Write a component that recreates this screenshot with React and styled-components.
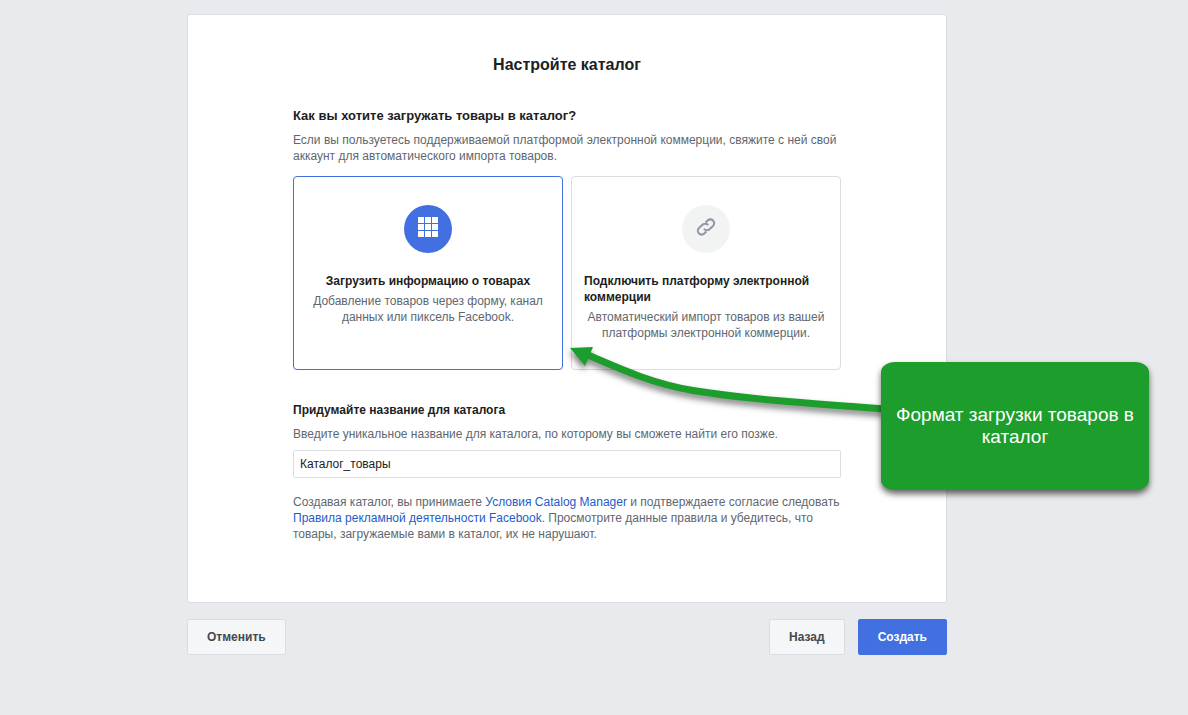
import React, { useState } from 'react';
import styled, { createGlobalStyle } from 'styled-components';

const GlobalStyle = createGlobalStyle`
  *, *::before, *::after {
    box-sizing: border-box;
  }

  body {
    margin: 0;
    background-color: #e9eaed;
    color: #1c1e21;
    font-family: "Liberation Sans", Arial, sans-serif;
    font-size: 12px;
    line-height: 16px;
    overflow-x: hidden;
  }
`;

const Page = styled.main`
  padding: 14px 54px 60px 0;
`;

const Column = styled.div`
  position: relative;
  width: 100%;
  max-width: 760px;
  margin: 0 auto;
`;

const Panel = styled.section`
  background-color: #ffffff;
  border: 1px solid #dadde1;
  border-radius: 3px;
  padding: 40px 105px 60px;
`;

const Title = styled.h1`
  margin: 0 0 33px;
  font-size: 16px;
  line-height: 20px;
  text-align: center;
`;

const Heading = styled.h2`
  margin: 0 0 8px;
  font-size: 13px;
  line-height: 16px;
`;

const FieldLabel = styled.label`
  display: block;
  margin: 32px 0 8px;
  font-weight: bold;
`;

const Text = styled.p`
  margin: 0;
  color: #606770;
`;

const Options = styled.div`
  display: grid;
  grid-template-columns: 1fr 1fr;
  gap: 8px;
  margin-top: 12px;
`;

const Option = styled.label`
  display: flex;
  flex-direction: column;
  align-items: center;
  padding: 28px 12px;
  border: 1px solid ${(props) => (props.$selected ? '#4270e0' : '#dadde1')};
  border-radius: 4px;
  cursor: pointer;
`;

const HiddenRadio = styled.input`
  appearance: none;
  position: absolute;
  width: 1px;
  height: 1px;
  margin: 0;
  opacity: 0;
`;

const IconCircle = styled.span`
  display: flex;
  align-items: center;
  justify-content: center;
  width: 48px;
  height: 48px;
  margin-bottom: 20px;
  padding-bottom: 4px;
  border-radius: 50%;
  background-color: ${(props) => (props.$selected ? '#4270e0' : '#f2f4f4')};
  color: ${(props) => (props.$selected ? '#ffffff' : '#9497a2')};
`;

const OptionTitle = styled.span`
  margin-bottom: 4px;
  font-weight: bold;
`;

const OptionText = styled.span`
  color: #606770;
  text-align: center;
`;

const NameInput = styled.input`
  display: block;
  width: 100%;
  height: 28px;
  margin: 8px 0 16px;
  padding: 0 6px;
  border: 1px solid #dadde1;
  border-radius: 2px;
  background-color: #ffffff;
  color: #1c1e21;
  font: inherit;
`;

const Link = styled.a`
  color: #245bcb;
  text-decoration: none;
`;

const Footer = styled.footer`
  display: flex;
  gap: 13px;
  margin-top: 16px;
`;

const Button = styled.button`
  height: 36px;
  padding: 0 19px;
  border: 1px solid ${(props) => (props.$primary ? '#4270e0' : '#dadde1')};
  border-radius: 2px;
  background-color: ${(props) => (props.$primary ? '#4270e0' : '#f5f6f7')};
  color: ${(props) => (props.$primary ? '#ffffff' : '#444950')};
  font: inherit;
  font-weight: bold;
  cursor: pointer;
`;

const CancelButton = styled(Button)`
  margin-right: auto;
`;

const Annotation = styled.aside`
  position: absolute;
  top: 326px;
  left: 378px;
  display: flex;
  align-items: flex-start;
  pointer-events: none;
`;

const Arrow = styled.svg`
  flex: none;
  margin-right: -4px;
  overflow: visible;
  filter: drop-shadow(-1px 4px 3px rgba(0, 0, 0, 0.5));
`;

const Callout = styled.div`
  position: relative;
  display: flex;
  align-items: center;
  justify-content: center;
  width: 268px;
  height: 128px;
  margin-top: 22px;
  padding: 0 12px;
  border-radius: 14px / 10px;
  background-color: #1d9e2c;
  box-shadow: 0 4px 6px rgba(0, 0, 0, 0.6);
  color: #ffffff;
  font-size: 19px;
  line-height: 22px;
  text-align: center;
`;

function GridIcon() {
  return (
    <svg width="20" height="20" viewBox="0 0 20 20" fill="currentColor" aria-hidden="true">
      {[0, 7, 14].map((y) =>
        [0, 7, 14].map((x) => <rect key={`${x}-${y}`} x={x} y={y} width="6" height="6" />)
      )}
    </svg>
  );
}

function ChainIcon() {
  return (
    <svg
      width="20"
      height="20"
      viewBox="0 0 24 24"
      fill="none"
      stroke="currentColor"
      strokeWidth="2.5"
      aria-hidden="true"
    >
      <path d="M14.6 9.9A4.5 4.5 0 0 0 8.1 9.1l-4.5 4.2a4.5 4.5 0 0 0 6.4 6.5l2.4-2.3" />
      <path d="M9.4 14.1a4.5 4.5 0 0 0 6.5.8l4.5-4.2a4.5 4.5 0 0 0-6.4-6.5l-2.4 2.3" />
    </svg>
  );
}

const options = [
  {
    id: 'upload',
    icon: <GridIcon />,
    title: 'Загрузить информацию о товарах',
    text: 'Добавление товаров через форму, канал данных или пиксель Facebook.',
  },
  {
    id: 'connect',
    icon: <ChainIcon />,
    title: 'Подключить платформу электронной коммерции',
    text: 'Автоматический импорт товаров из вашей платформы электронной коммерции.',
  },
];

function App() {
  const [method, setMethod] = useState('upload');
  const [name, setName] = useState('Каталог_товары');

  return (
    <Page>
      <GlobalStyle />
      <Column>
        <Panel>
          <Title>Настройте каталог</Title>
          <Heading id="method-heading">Как вы хотите загружать товары в каталог?</Heading>
          <Text>
            Если вы пользуетесь поддерживаемой платформой электронной коммерции, свяжите с ней свой
            аккаунт для автоматического импорта товаров.
          </Text>
          <Options role="radiogroup" aria-labelledby="method-heading">
            {options.map((option) => (
              <Option key={option.id} $selected={method === option.id}>
                <HiddenRadio
                  type="radio"
                  name="method"
                  value={option.id}
                  checked={method === option.id}
                  onChange={() => setMethod(option.id)}
                />
                <IconCircle $selected={method === option.id}>{option.icon}</IconCircle>
                <OptionTitle>{option.title}</OptionTitle>
                <OptionText>{option.text}</OptionText>
              </Option>
            ))}
          </Options>
          <FieldLabel htmlFor="catalog-name">Придумайте название для каталога</FieldLabel>
          <Text>Введите уникальное название для каталога, по которому вы сможете найти его позже.</Text>
          <NameInput
            id="catalog-name"
            type="text"
            value={name}
            onChange={(e) => setName(e.target.value)}
          />
          <Text>
            Создавая каталог, вы принимаете <Link href="#terms">Условия Catalog Manager</Link> и
            подтверждаете согласие следовать{' '}
            <Link href="#policies">Правила рекламной деятельности Facebook</Link>. Просмотрите данные
            правила и убедитесь, что товары, загружаемые вами в каталог, их не нарушают.
          </Text>
        </Panel>
        <Footer>
          <CancelButton type="button">Отменить</CancelButton>
          <Button type="button">Назад</Button>
          <Button type="button" $primary>Создать</Button>
        </Footer>
        <Annotation>
          <Arrow width="320" height="80" viewBox="565 340 320 80" aria-hidden="true">
            <path
              d="M588 355 C627 372 655 384 693 390.500 C745 399 815 404 885 409"
              fill="none"
              stroke="#1d9e2c"
              strokeWidth="7"
            />
            <path d="M570 348 L593 347 L585 366 Z" fill="#1d9e2c" />
          </Arrow>
          <Callout>Формат загрузки товаров в каталог</Callout>
        </Annotation>
      </Column>
    </Page>
  );
}

export default App;
